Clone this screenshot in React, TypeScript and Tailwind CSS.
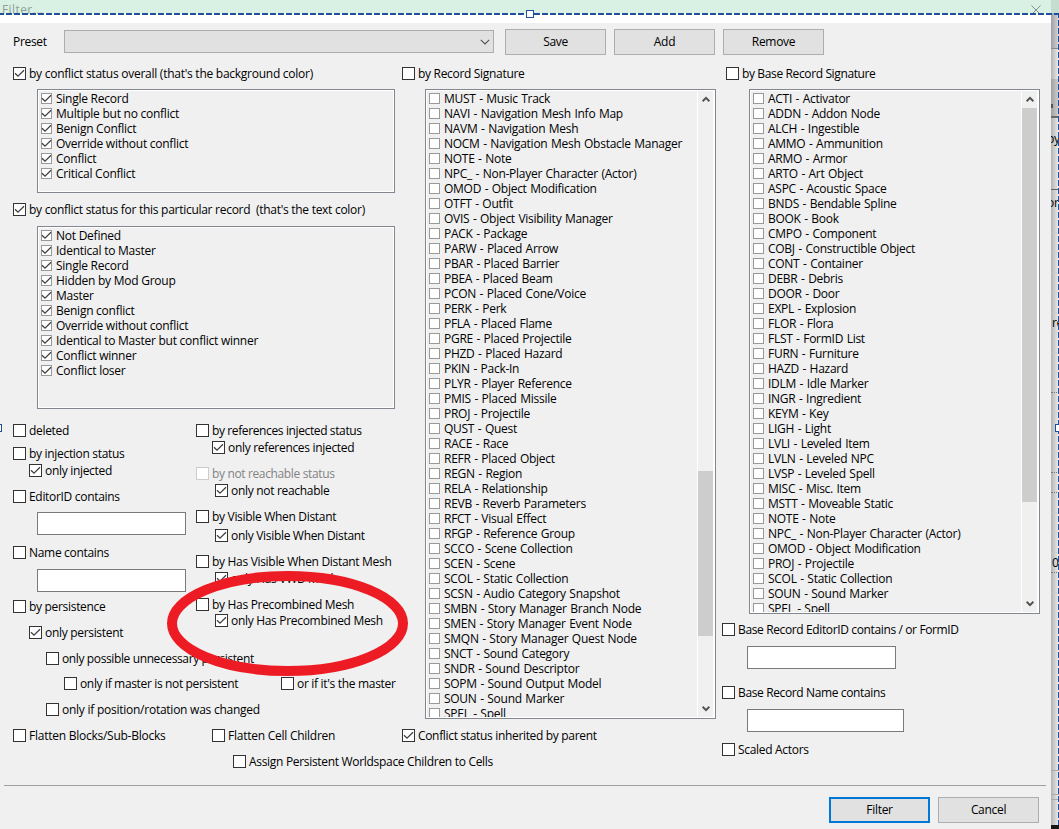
import { clsx } from "clsx";

type CheckProps = {
    label: string;
    checked?: boolean;
    disabled?: boolean;
    className?: string;
};

const overallStatus = [
    "Single Record",
    "Multiple but no conflict",
    "Benign Conflict",
    "Override without conflict",
    "Conflict",
    "Critical Conflict",
];

const recordStatus = [
    "Not Defined",
    "Identical to Master",
    "Single Record",
    "Hidden by Mod Group",
    "Master",
    "Benign conflict",
    "Override without conflict",
    "Identical to Master but conflict winner",
    "Conflict winner",
    "Conflict loser",
];

const signatures = [
    "MUST - Music Track",
    "NAVI - Navigation Mesh Info Map",
    "NAVM - Navigation Mesh",
    "NOCM - Navigation Mesh Obstacle Manager",
    "NOTE - Note",
    "NPC_ - Non-Player Character (Actor)",
    "OMOD - Object Modification",
    "OTFT - Outfit",
    "OVIS - Object Visibility Manager",
    "PACK - Package",
    "PARW - Placed Arrow",
    "PBAR - Placed Barrier",
    "PBEA - Placed Beam",
    "PCON - Placed Cone/Voice",
    "PERK - Perk",
    "PFLA - Placed Flame",
    "PGRE - Placed Projectile",
    "PHZD - Placed Hazard",
    "PKIN - Pack-In",
    "PLYR - Player Reference",
    "PMIS - Placed Missile",
    "PROJ - Projectile",
    "QUST - Quest",
    "RACE - Race",
    "REFR - Placed Object",
    "REGN - Region",
    "RELA - Relationship",
    "REVB - Reverb Parameters",
    "RFCT - Visual Effect",
    "RFGP - Reference Group",
    "SCCO - Scene Collection",
    "SCEN - Scene",
    "SCOL - Static Collection",
    "SCSN - Audio Category Snapshot",
    "SMBN - Story Manager Branch Node",
    "SMEN - Story Manager Event Node",
    "SMQN - Story Manager Quest Node",
    "SNCT - Sound Category",
    "SNDR - Sound Descriptor",
    "SOPM - Sound Output Model",
    "SOUN - Sound Marker",
    "SPEL - Spell",
];

const baseSignatures = [
    "ACTI - Activator",
    "ADDN - Addon Node",
    "ALCH - Ingestible",
    "AMMO - Ammunition",
    "ARMO - Armor",
    "ARTO - Art Object",
    "ASPC - Acoustic Space",
    "BNDS - Bendable Spline",
    "BOOK - Book",
    "CMPO - Component",
    "COBJ - Constructible Object",
    "CONT - Container",
    "DEBR - Debris",
    "DOOR - Door",
    "EXPL - Explosion",
    "FLOR - Flora",
    "FLST - FormID List",
    "FURN - Furniture",
    "HAZD - Hazard",
    "IDLM - Idle Marker",
    "INGR - Ingredient",
    "KEYM - Key",
    "LIGH - Light",
    "LVLI - Leveled Item",
    "LVLN - Leveled NPC",
    "LVSP - Leveled Spell",
    "MISC - Misc. Item",
    "MSTT - Moveable Static",
    "NOTE - Note",
    "NPC_ - Non-Player Character (Actor)",
    "OMOD - Object Modification",
    "PROJ - Projectile",
    "SCOL - Static Collection",
    "SOUN - Sound Marker",
    "SPEL - Spell",
];

// 20px grid rows of the window behind: text and whether the top line is dark
const gridRows = Array.from({ length: 19 }, (_, i) => ({
    text: i === 4 ? "re" : i === 16 ? "0" : "",
    dark: [8, 12, 13, 17].includes(i),
}));

const Tick = () => (
    <svg viewBox="0 0 11 11" className="size-[11px] shrink-0" fill="none" stroke="#404040" strokeWidth="1.3">
        <path d="M1 5.2 L4 8.2 L10 2.2" />
    </svg>
);

const Check = ({ label, checked, disabled, className }: CheckProps) => (
    <label className={clsx("flex h-[13px] items-center whitespace-pre leading-[13px]", disabled && "text-[#838383]", className)}>
        <span className={clsx("flex size-[13px] shrink-0 items-center justify-center border bg-white", disabled ? "border-[#cccccc]" : "border-[#333333]")}>
            {checked && <Tick />}
        </span>
        <span className="ml-[3px]">{label}</span>
    </label>
);

const ListItem = ({ label, checked }: CheckProps) => (
    <li className="flex h-[15px] shrink-0 items-center whitespace-pre leading-[15px]">
        <span className="ml-0.5 flex size-[11px] shrink-0 items-center justify-center border border-[#999999] bg-white">
            {checked && <Tick />}
        </span>
        <span className="ml-1">{label}</span>
    </li>
);

const Chevron = ({ down }: { down?: boolean }) => (
    <svg viewBox="0 0 8 7" className={clsx("h-[7px] w-2", down && "rotate-180")} fill="none" stroke="#505050" strokeWidth="2">
        <path d="M0.6 5.2 L4 1.8 L7.4 5.2" />
    </svg>
);

type ListProps = {
    items: string[];
    checked?: boolean;
    className: string;
    thumb?: string;
};

const List = ({ items, checked, className, thumb }: ListProps) => (
    <div className={clsx("flex border border-[#828790] bg-white p-px", thumb ? "tracking-[-0.27px] [word-spacing:0.7px]" : "tracking-[-0.25px]", className)}>
        <ul className="flex min-w-0 flex-1 flex-col overflow-hidden bg-[#f0f0f0]">
            {items.map((item) => (
                <ListItem key={item} label={item} checked={checked} />
            ))}
        </ul>
        {thumb && (
            <div className="ml-px mr-px flex w-[15px] flex-col items-center justify-between bg-[#f0f0f0]">
                <div className="flex h-[17px] items-center">
                    <Chevron />
                </div>
                <div className="w-full flex-1">
                    <div className={clsx("w-full bg-[#cdcdcd]", thumb)} />
                </div>
                <div className="flex h-[17px] items-center">
                    <Chevron down />
                </div>
            </div>
        )}
    </div>
);

const Input = ({ className }: { className: string }) => (
    <input className={clsx("block h-[23px] border border-[#7a7a7a] bg-white outline-none", className)} />
);

const Button = ({ label, primary }: { label: string; primary?: boolean }) => (
    <button className={clsx("h-[26px] w-[101px] bg-[#e1e1e1]", primary ? "border-2 border-[#0078d7]" : "border border-[#adadad]")}>
        {label}
    </button>
);

// Strip of the window that lies behind the dialog
const Backdrop = () => (
    <div className="flex h-[829px] w-2 shrink-0 flex-col overflow-hidden bg-linear-to-r from-[#b4b4b4] to-[#eeeeee]">
        <div className="h-[13px] shrink-0 bg-[#c5ddd1]" />
        <div className="h-[35px] shrink-0 bg-linear-to-r from-[#a0a0a4] to-[#d6d6dc]" />
        <div className="h-[31px] shrink-0 border-t border-[#8a8a8a]" />
        <div className="flex h-[39px] shrink-0 items-end border-b-2 border-[#6a6a6a] bg-linear-to-r from-[#a0a0a0] to-[#d2d2d2] pb-2">
            <span className="h-1 w-0.5 bg-[#555555]" />
        </div>
        <div className="h-[72px] shrink-0 border-b border-[#606060] pt-3 leading-[18px]">
            <span className="-ml-1">by</span>
        </div>
        <div className="h-[42px] shrink-0 pt-1 leading-[18px]">
            <span className="-ml-1">or</span>
        </div>
        {gridRows.map((row, i) => (
            <div key={i} className={clsx("h-5 shrink-0 border-t border-dotted pl-px leading-[20px]", row.dark ? "border-[#777777]" : "border-[#c4c4c4]")}>
                {row.text}
            </div>
        ))}
        <div className="h-[158px] shrink-0" />
        <div className="h-[25px] shrink-0 border-y border-[#aaaaaa]" />
        <div className="mt-1 h-[26px] shrink-0 border-t border-[#aaaaaa]" />
        <div className="h-1 shrink-0 bg-[#151515]" />
    </div>
);

const App = () => {
    return (
        <div className="relative flex h-[829px] w-[1059px] overflow-hidden bg-[#f0f0f0] font-['Open_Sans',sans-serif] text-[12px] tracking-[-0.31px] text-black">
            <div className="flex w-[1051px] shrink-0 flex-col">
                {/* Title bar */}
                <header className="flex h-[23px] shrink-0 items-start justify-between bg-linear-to-b from-[#d9f1e4] from-[13px] to-white to-[13px] pl-0.5 pr-2.5 text-[#8fa096]">
                    <span className="leading-[19px] tracking-[0.4px]">Filter...</span>
                    <svg viewBox="0 0 10 10" className="mt-[5px] size-2.5" stroke="#83928a" strokeWidth="1">
                        <path d="M0.5 0.5 L9.5 9.5 M9.5 0.5 L0.5 9.5" />
                    </svg>
                </header>

                {/* Presets */}
                <div className="flex h-[44px] shrink-0 items-start pl-[13px] pt-1.5">
                    <span className="w-[51px] leading-[26px]">Preset</span>
                    <div className="mr-[11px] mt-px flex h-[23px] w-[430px] items-center justify-end border border-[#adadad] bg-[#e1e1e1] pr-[3px]">
                        <svg viewBox="0 0 10 6" className="h-1.5 w-2.5" fill="none" stroke="#505050" strokeWidth="1.1">
                            <path d="M0.8 0.8 L5 5 L9.2 0.8" />
                        </svg>
                    </div>
                    <div className="flex gap-2">
                        <Button label="Save" />
                        <Button label="Add" />
                        <Button label="Remove" />
                    </div>
                </div>

                <main className="flex h-[718px] shrink-0">
                    {/* Left column */}
                    <section className="ml-[13px] w-[389px] shrink-0">
                        <Check checked label="by conflict status overall (that's the background color)" className="tracking-[-0.26px]" />
                        <List checked items={overallStatus} className="ml-6 mt-[9px] h-[104px] w-[358px]" />
                        <Check checked label="by conflict status for this particular record  (that's the text color)" className="mt-2.5 tracking-[-0.28px]" />
                        <List checked items={recordStatus} className="ml-6 mt-2.5 h-[183px] w-[358px]" />
                        <div className="mt-[15px] flex h-[253px]">
                            <div className="w-[183px] shrink-0">
                                <Check label="deleted" />
                                <Check label="by injection status" className="mt-2.5" />
                                <Check checked label="only injected" className="ml-4 mt-1" />
                                <Check label="EditorID contains" className="mt-[13px]" />
                                <Input className="ml-6 mt-[9px] w-[149px]" />
                                <Check label="Name contains" className="mt-[11px]" />
                                <Input className="ml-6 mt-2.5 w-[149px]" />
                                <Check label="by persistence" className="mt-2" />
                                <Check checked label="only persistent" className="ml-4 mt-[13px]" />
                                <Check label="only possible unnecessary persistent" className="ml-[33px] mt-[13px] tracking-[-0.38px]" />
                            </div>
                            <div className="shrink-0">
                                <Check label="by references injected status" className="tracking-[-0.38px]" />
                                <Check checked label="only references injected" className="ml-4 mt-1" />
                                <Check disabled label="by not reachable status" className="mt-[13px] tracking-[-0.36px]" />
                                <Check checked label="only not reachable" className="ml-[19px] mt-1" />
                                <Check label="by Visible When Distant" className="mt-[13px]" />
                                <Check checked label="only Visible When Distant" className="ml-[19px] mt-1.5" />
                                <Check label="by Has Visible When Distant Mesh" className="mt-[13px]" />
                                <Check checked label="only Has VWD Mesh" className="ml-[19px] mt-1" />
                                <Check label="by Has Precombined Mesh" className="mt-[13px]" />
                                <Check checked label="only Has Precombined Mesh" className="ml-[19px] mt-[3px]" />
                            </div>
                        </div>
                        <div className="flex">
                            <Check label="only if master is not persistent" className="ml-[51px] w-[217px] tracking-[-0.35px]" />
                            <Check label="or if it's the master" />
                        </div>
                        <Check label="only if position/rotation was changed" className="ml-[33px] mt-[13px] tracking-[-0.25px]" />
                        <div className="mt-[13px] flex">
                            <Check label="Flatten Blocks/Sub-Blocks" className="w-[199px] tracking-[-0.25px]" />
                            <Check label="Flatten Cell Children" className="tracking-[-0.25px]" />
                        </div>
                        <Check label="Assign Persistent Worldspace Children to Cells" className="ml-[220px] mt-[13px]" />
                    </section>

                    {/* Record signatures */}
                    <section className="w-80 shrink-0">
                        <Check label="by Record Signature" />
                        <List items={signatures} className="ml-[23px] mt-[9px] h-[630px] w-[291px]" thumb="mt-[363px] h-[165px]" />
                        <Check checked label="Conflict status inherited by parent" className="mt-2.5 tracking-[-0.33px]" />
                    </section>

                    {/* Base record signatures */}
                    <section className="shrink-0">
                        <Check label="by Base Record Signature" className="ml-1 tracking-[-0.37px]" />
                        <List items={baseSignatures} className="ml-[27px] mt-[9px] h-[525px] w-[291px]" thumb="h-[394px]" />
                        <Check label="Base Record EditorID contains / or FormID" className="mt-[9px] tracking-[-0.37px]" />
                        <Input className="ml-[25px] mt-2.5 w-[149px]" />
                        <Check label="Base Record Name contains" className="mt-[17px] tracking-[-0.37px]" />
                        <Input className="ml-[25px] mt-2.5 w-[157px]" />
                        <Check label="Scaled Actors" className="mt-[11px]" />
                    </section>
                </main>

                <footer className="ml-1 mr-[5px] flex justify-end gap-2 border-t border-[#a0a0a0] pr-[7px] pt-[11px]">
                    <Button primary label="Filter" />
                    <Button label="Cancel" />
                </footer>
            </div>

            <Backdrop />

            {/* Selection frame with its handles */}
            <div className="absolute left-0 top-[13px] h-0.5 w-full bg-[repeating-linear-gradient(90deg,#1f4e9a_0_4px,transparent_4px_6px,#1f4e9a_6px_8px)]" />
            <div className="absolute right-0 top-[13px] h-[812px] w-px bg-[repeating-linear-gradient(180deg,#1f4e9a_0_5px,transparent_5px_7px,#1f4e9a_7px_8px)]" />
            <div className="absolute left-[526px] top-2.5 size-2 border border-[#1f4e9a] bg-white" />
            <div className="absolute -left-1.5 top-[424px] size-2 border border-[#1f4e9a] bg-white" />
            <div className="absolute left-[1055px] top-[424px] size-2 border border-[#1f4e9a] bg-white" />

            {/* Red marker around the precombined mesh options */}
            <svg viewBox="0 0 241 105" className="absolute left-[167px] top-[571px] h-[105px] w-[241px]" fill="none" stroke="#ed1c24" strokeWidth="10">
                <ellipse cx="120.5" cy="52.5" rx="115.5" ry="47.5" />
            </svg>
        </div>
    );
};

export default App;
